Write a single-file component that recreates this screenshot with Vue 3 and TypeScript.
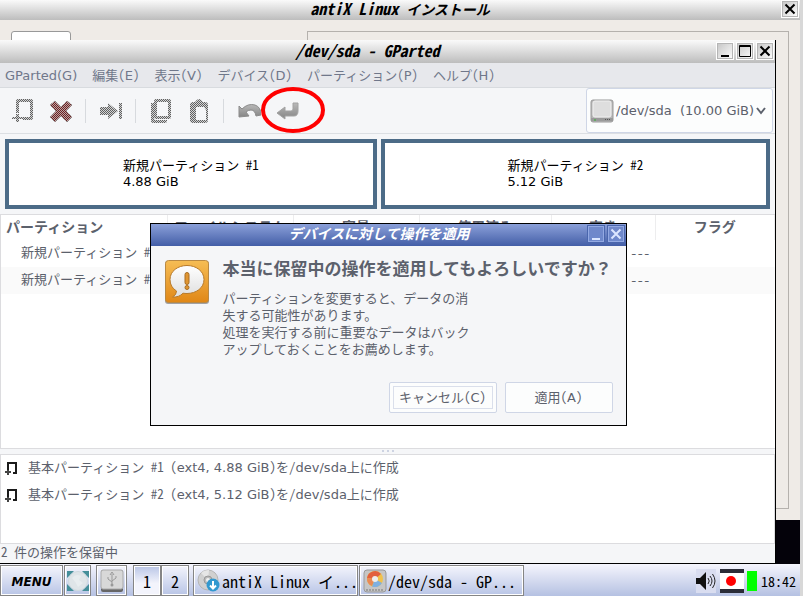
<script setup lang="ts">
import { ref } from 'vue'

interface Menu { label: string; key?: string }
interface Partition { name: string; number: number; size: string; share: number }

const menus: Menu[] = [
  { label: 'GParted(G)' },
  { label: '編集', key: 'E' },
  { label: '表示', key: 'V' },
  { label: 'デバイス', key: 'D' },
  { label: 'パーティション', key: 'P' },
  { label: 'ヘルプ', key: 'H' },
]
const partitions: Partition[] = [
  { name: '新規パーティション', number: 1, size: '4.88 GiB', share: 488 },
  { name: '新規パーティション', number: 2, size: '5.12 GiB', share: 512 },
]
const device = ref('sda')
const workspace = ref(1)
</script>

<template>
  <div class="desktop">
    <section class="installer">
      <header class="titlebar">
        <h1 class="title"><span class="half">antiX Linux </span>インストール</h1>
        <div class="controls">
          <button class="ctl" aria-label="閉じる"><svg viewBox="0 0 12 12"><path d="M1.5 1.5L10.5 10.5M10.5 1.5L1.5 10.5" /></svg></button>
        </div>
      </header>
      <div class="installer-body">
        <button class="tab" aria-label="メニュー"><i></i></button>
        <div class="group"></div>
      </div>
    </section>

    <section class="gparted">
      <header class="titlebar tall">
        <h2 class="title half">/dev/sda - GParted</h2>
        <div class="controls">
          <button class="ctl" aria-label="最小化"><svg viewBox="0 0 12 12"><path d="M2 11H10" /></svg></button>
          <button class="ctl" aria-label="最大化"><svg viewBox="0 0 12 12"><path class="thin" d="M.5 .5H11.5V11.5H.5ZM.5 1.5H11.5" /></svg></button>
          <button class="ctl" aria-label="閉じる"><svg viewBox="0 0 12 12"><path d="M1.5 1.5L10.5 10.5M10.5 1.5L1.5 10.5" /></svg></button>
        </div>
      </header>

      <nav class="menubar">
        <button v-for="m in menus" :key="m.label" class="menu">{{ m.label }}<template v-if="m.key"><span class="half">(</span>{{ m.key }}<span class="half">)</span></template></button>
      </nav>

      <div class="toolbar">
        <button class="tool" aria-label="新規">
          <svg viewBox="0 0 24 24">
            <defs>
              <pattern id="dither" width="2" height="2" patternUnits="userSpaceOnUse">
                <path d="M0 0h2v2H0z" fill="#d3d4d5" /><path d="M0 0h1v1H0zM1 1h1v1H1z" fill="#606060" shape-rendering="crispEdges" />
              </pattern>
              <pattern id="ditherRed" width="2" height="2" patternUnits="userSpaceOnUse">
                <path d="M0 0h2v2H0z" fill="#b9a4a4" /><path d="M0 0h1v1H0zM1 1h1v1H1z" fill="#6d2020" shape-rendering="crispEdges" />
              </pattern>
              <linearGradient id="steel" x1="0" y1="0" x2="0" y2="1">
                <stop offset="0" stop-color="#b9b9b9" /><stop offset="1" stop-color="#858585" />
              </linearGradient>
            </defs>
            <path fill="url(#dither)" fill-rule="evenodd" d="M7 0H20Q22 0 22 2V19Q22 21 20 21H12V18H19V3H8V14H5V2Q5 0 7 0ZM5 15H8V18H12V20H8V23H5V20H1V18H5Z" />
          </svg>
        </button>
        <button class="tool" aria-label="削除">
          <svg viewBox="0 0 24 24"><path fill="url(#ditherRed)" stroke="#777" stroke-width="1" stroke-dasharray="1 1" d="M6 2L12 8L18 2L23 6L17 12L23 18L18 23L12 17L6 23L1 18L7 12L1 6Z" /></svg>
        </button>
        <span class="sep"></span>
        <button class="tool" aria-label="リサイズ/移動">
          <svg viewBox="0 0 24 24"><path fill="url(#dither)" d="M1 8H9V4L19 12L9 20V16H1ZM20 4H23V20H20Z" /></svg>
        </button>
        <span class="sep"></span>
        <button class="tool" aria-label="コピー">
          <svg viewBox="0 0 24 24"><path fill="url(#dither)" fill-rule="evenodd" d="M7 0H20Q22 0 22 2V18Q22 20 20 20H7Q5 20 5 18V2Q5 0 7 0ZM8 3V17H19V3ZM2 4H5V20Q5 21 7 21H18V22Q18 24 16 24H4Q2 24 2 22Z" /></svg>
        </button>
        <button class="tool" aria-label="貼り付け">
          <svg viewBox="0 0 24 24"><path fill="url(#dither)" fill-rule="evenodd" d="M8 3Q10 0 12 0T16 3H18Q21 3 21 6V21Q21 24 18 24H6Q3 24 3 21V6Q3 3 6 3ZM9 8V21H19V11L17 8Z" /></svg>
        </button>
        <span class="sep"></span>
        <button class="tool" aria-label="元に戻す">
          <svg viewBox="0 0 24 24"><path fill="url(#steel)" stroke="#8b8b8b" d="M2 7L5 10Q11 4 18 6Q24 8 24 16L19 17Q18 11 14 11Q11 11 9 13L12 17L2 18Z" /></svg>
        </button>
        <button class="tool apply" aria-label="適用">
          <svg viewBox="0 0 24 24"><path fill="url(#steel)" stroke="#a2a2a2" d="M18 4H23V12Q23 17 19 17H10V20L2 14L10 8V12H16Q18 12 18 10Z" /></svg>
          <svg class="ring" viewBox="0 0 66 48"><ellipse cx="33" cy="24" rx="30" ry="21" /></svg>
        </button>
        <label class="device">
          <svg class="disk" viewBox="0 0 24 24">
            <rect x="1" y="1" width="22" height="22" rx="2" fill="#b9b9b9" stroke="#999" />
            <rect x="3" y="2" width="18" height="16" rx="2" fill="#dedede" stroke="#f0f0f0" />
            <path d="M1 19H23V22H1Z" fill="#9a9a9a" /><path d="M4 20H6V22H4Z" fill="#6a6" /><path d="M15 20.5H21" stroke="#555" stroke-dasharray="1 1" />
          </svg>
          <select v-model="device" aria-label="デバイス">
            <option value="sda">/dev/sda&nbsp; (10.00 GiB)</option>
          </select>
          <svg class="chev" viewBox="0 0 10 8"><path d="M1 1L5 6L9 1" /></svg>
        </label>
      </div>

      <div class="map">
        <div v-for="p in partitions" :key="p.number" class="part" :style="{ flexGrow: p.share }">
          <div>{{ p.name }}<span class="half"> #{{ p.number }}</span><br />{{ p.size }}</div>
        </div>
      </div>

      <div class="listing">
        <table>
          <colgroup>
            <col class="c-name" /><col class="c-fs" /><col class="c-fs" /><col class="c-used" /><col class="c-free" /><col />
          </colgroup>
          <thead>
            <tr><th class="first">パーティション</th><th>ファイルシステム</th><th>容量</th><th>使用済み</th><th>空き</th><th>フラグ</th></tr>
          </thead>
          <tbody>
            <tr v-for="p in partitions" :key="p.number">
              <td class="name">{{ p.name }}<span class="half"> #{{ p.number }}</span></td>
              <td></td><td></td><td></td><td class="num half">---</td><td></td>
            </tr>
          </tbody>
        </table>
      </div>

      <div class="grip"><i></i><i></i><i></i></div>

      <ul class="operations">
        <li v-for="p in partitions" :key="p.number">
          <svg viewBox="0 0 14 14"><path fill="none" stroke="#1b1b1b" stroke-width="2" d="M3 9V2H11V12H8" /><path stroke="#444" stroke-width="2" d="M0 11H6M3 9V14" /></svg>
          <span>基本パーティション<span class="half"> #{{ p.number }} (</span>ext4, {{ p.size }}<span class="half">)</span>を<span class="half">/</span>dev/sda上に作成</span>
        </li>
      </ul>

      <footer class="status"><span class="half">2 </span>件の操作を保留中</footer>

      <section class="dialog" role="alertdialog" aria-labelledby="ask">
        <header class="dialog-bar">
          <h2 class="title">デバイスに対して操作を適用</h2>
          <div class="controls">
            <button class="ctl blue" aria-label="最小化"><svg viewBox="0 0 12 12"><path d="M2 11H10" /></svg></button>
            <button class="ctl blue" aria-label="閉じる"><svg viewBox="0 0 12 12"><path d="M1.5 1.5L10.5 10.5M10.5 1.5L1.5 10.5" /></svg></button>
          </div>
        </header>
        <div class="dialog-body">
          <svg class="warn" viewBox="0 0 46 46">
            <defs>
              <linearGradient id="amber" x1="0" y1="0" x2="0" y2="1"><stop offset="0" stop-color="#f6bd55" /><stop offset="1" stop-color="#e08716" /></linearGradient>
              <linearGradient id="bubble" x1="0" y1="0" x2="0" y2="1"><stop offset="0" stop-color="#fff" /><stop offset="1" stop-color="#dedede" /></linearGradient>
            </defs>
            <rect x="1" y="2" width="44" height="43" rx="3" fill="#7d7d80" opacity=".7" />
            <rect x="1.500" y="1.500" width="43" height="42" rx="3" fill="url(#amber)" stroke="#b98944" />
            <path fill="url(#bubble)" stroke="#b87a2a" d="M23 6.500C32 6.500 40 12 40 20.500S32 34.500 23 34.500Q21 34.500 19 34.200Q15 38.500 8.500 38Q12.500 36 12.500 32Q6 28 6 20.500C6 12 14 6.500 23 6.500Z" />
            <rect x="21" y="13.500" width="4" height="12" rx="2" fill="#e09632" stroke="#a96d22" /><circle cx="23" cy="28.500" r="2" fill="#e09632" stroke="#a96d22" />
          </svg>
          <div class="message">
            <h3 id="ask">本当に保留中の操作を適用してもよろしいですか？</h3>
            <p>パーティションを変更すると、データの消<br />失する可能性があります。<br />処理を実行する前に重要なデータはバック<br />アップしておくことをお薦めします。</p>
          </div>
        </div>
        <div class="actions">
          <button class="btn focus"><span class="inner"><span>キャンセル<span class="half">(</span>C<span class="half">)</span></span></span></button>
          <button class="btn">適用<span class="half">(</span>A<span class="half">)</span></button>
        </div>
      </section>
    </section>

    <footer class="taskbar">
      <button class="task start">MENU</button>
      <button class="task show" aria-label="デスクトップを表示">
        <svg viewBox="0 0 22 22"><path fill="#458f99" d="M0 1H7L0 8ZM15 1H22V8ZM0 14L7 21H0ZM22 14V21H15Z" /><circle cx="11" cy="11" r="9.500" fill="#dfe5e8" stroke="#cfdade" /><path d="M5 8Q9 3 14 6L12 10L16 13L11 17Q9 12 5 8Z" fill="#e8edef" /></svg>
      </button>
      <button class="task usb" aria-label="USB">
        <svg viewBox="0 0 24 24"><rect x="1" y="1" width="22" height="22" rx="2" fill="#666" /><rect x="1" y="1" width="22" height="19" rx="2" fill="#d8d8d8" stroke="#aaa" /><path d="M12 16V5M12 13L8 10V8M12 12L16 9V7M10 6L12 3L14 6" fill="none" stroke="#999" /><circle cx="12" cy="16" r="1.500" fill="#999" /></svg>
      </button>
      <div class="pager">
        <button v-for="n in 2" :key="n" class="task space" :class="{ on: workspace === n }" @click="workspace = n">{{ n }}</button>
      </div>
      <button class="task app">
        <svg viewBox="0 0 24 24"><circle cx="11" cy="11" r="10" fill="#d0d0d0" stroke="#b5b5b5" /><path d="M11 11L4 4A10 10 0 0 1 12 1Z" fill="#e6e6e6" /><circle cx="11" cy="11" r="4" fill="#bbb" stroke="#999" /><circle cx="11" cy="11" r="2" fill="#f1f1f1" /><circle cx="16" cy="16" r="6.500" fill="#3298cf" /><path d="M16 12V19M13 16.500L16 19.500L19 16.500" fill="none" stroke="#fff" stroke-width="2" /></svg>
        <span>antiX Linux イ...</span>
      </button>
      <button class="task app">
        <svg viewBox="0 0 24 24"><rect x="1" y="1" width="22" height="22" rx="3" fill="#c6c6c6" stroke="#999" /><path d="M3 21H21" stroke="#777" stroke-dasharray="2 1" /><circle cx="12" cy="10" r="8" fill="#f0c24c" /><path d="M12 10L4 9A8 8 0 0 1 18 5Z" fill="#e2603e" /><path d="M12 10L4 9A8 8 0 0 0 9 17Z" fill="#e98a55" /><path d="M12 10L9 17.500A8 8 0 0 0 19 14Z" fill="#7fb0e0" /><circle cx="12" cy="10" r="3" fill="#eee" /></svg>
        <span>/dev/sda - GP...</span>
      </button>
      <div class="tray">
        <svg class="speaker" viewBox="0 0 20 24"><path fill="#111" d="M0 9H4L10 3V21L4 15H0Z" /><path fill="none" stroke="#222" d="M12 9Q14.500 12 12 15M14 7Q18 12 14 17M16.500 5Q21.500 12 16.500 19" /></svg>
        <svg class="flag" viewBox="0 0 24 24"><path fill="#2b2d38" d="M0 0H24V24H0Z" /><path fill="#fff" d="M0 4H24V20H0Z" /><circle cx="11" cy="12" r="5" fill="#f00" /></svg>
        <span class="meter"></span>
        <time>18:42</time>
      </div>
    </footer>
  </div>
</template>

<style>
body { margin: 0; overflow: hidden; }
</style>

<style scoped>
.desktop {
  position: relative;
  height: 100vh;
  border-right: 3px solid #d8d8d8;
  box-sizing: border-box;
  background: #04020a;
  overflow: hidden;
  font: 13px/17px "DejaVu Sans", "Noto Sans CJK JP", sans-serif;
  color: #5c616c;
}
.desktop * { box-sizing: border-box; }
button, select { font: inherit; color: inherit; margin: 0; padding: 0; border: 0; background: none; }
h1, h2, h3, p, ul { margin: 0; padding: 0; }
svg { display: block; flex: none; }
.half { font-family: "Noto Sans Mono CJK JP", "Liberation Mono", monospace; line-height: 1; white-space: pre; }

.titlebar, .dialog-bar {
  display: grid;
  align-items: center;
  flex: none;
}
.titlebar { height: 20px; background: linear-gradient(#fafafa, #bdbdbd); color: #000; }
.titlebar.tall { height: 23px; }
.title {
  grid-area: 1 / 1;
  padding-bottom: 4px;
  text-align: center;
  font: italic bold 14px/16px "Noto Sans CJK JP", sans-serif;
  white-space: pre;
}
.title .half, .title.half { font-family: "Noto Sans Mono CJK JP", "Liberation Mono", monospace; font-size: 16px; }
.tall .title { padding-right: 40px; }
.dialog-bar .title { padding-right: 18px; }
.controls { grid-area: 1 / 1; place-self: start end; display: flex; gap: 2px; padding-right: 1px; }
.tall .controls { padding-top: 2px; }
.ctl {
  width: 18px; height: 18px; padding: 2px;
  border: 1px solid #fff; outline: 1px solid #b5b5b5; outline-offset: -2px;
  background: linear-gradient(135deg, #c4c4c4, #fff);
}
.ctl svg { width: 12px; height: 12px; }
.ctl path { fill: none; stroke: #000; stroke-width: 2; }
.ctl path.thin { stroke-width: 1; }
.ctl.blue { border-color: #4a66ad; outline-color: #93a9e2; background: linear-gradient(#7088ca, #6d88cc); }
.ctl.blue path { stroke: #dbe6ff; }

.installer { position: absolute; inset: 0 0 76px 0; display: flex; flex-direction: column; background: #efebe7; }
.installer-body { flex: 1; display: flex; align-items: flex-start; justify-content: space-between; padding: 11px; }
.tab { width: 60px; height: 30px; padding: 8px 13px; border: 1px solid #999; border-radius: 3px; background: #fff; display: flex; justify-content: flex-end; }
.tab i { width: 4px; height: 2px; background: #444; }
.group { align-self: stretch; width: 62%; border: 1px solid #b5b1ad; }

.gparted {
  position: absolute; inset: 40px 24px 32px 0;
  display: flex; flex-direction: column;
  border: solid #000; border-width: 0 1px 1px 0;
  background: #f5f6f8;
}
.menubar { display: flex; flex: none; height: 25px; padding-left: 5px; gap: 15px; background: #e7e8ec; border-bottom: 1px solid #d8dbdf; color: #70778a; }
.menu { white-space: nowrap; }

.toolbar { display: flex; align-items: center; flex: none; height: 46px; padding: 0 2px 0 4px; border-bottom: 1px solid #dcdfe3; }
.tool { position: relative; align-self: stretch; width: 38px; display: grid; place-items: start center; padding-top: 11px; }
.tool svg { width: 24px; height: 24px; }
.tool .ring { position: absolute; left: -8px; top: -2px; width: 66px; height: 48px; z-index: 2; }
.ring ellipse { fill: none; stroke: #f00; stroke-width: 4; }
.sep { width: 1px; height: 24px; margin: 0 6px 0 5px; background: #d7dade; }
.device {
  display: flex; align-items: center; align-self: stretch; width: 187px; margin-left: auto; padding: 0 6px 0 3px;
  border: 1px solid #cfd6e6; border-radius: 3px; background: #fcfdfd;
}
.disk { width: 24px; height: 24px; }
.device select { flex: 1; min-width: 0; appearance: none; padding-left: 2px; outline: 0; white-space: nowrap; }
.chev { width: 10px; height: 8px; }
.chev path { fill: none; stroke: #5c616c; stroke-width: 2; }

.map { display: flex; flex: none; gap: 4px; padding: 5px; }
.part { flex: 1 1 0; height: 70px; display: grid; place-items: center; border: 4px solid #4c6b87; background: #fff; color: #000; line-height: 16px; }

.listing { flex: 1; border: 1px solid #dcdcdf; border-right: 0; background: #fff; overflow: hidden; }
table { width: 100%; table-layout: fixed; border-collapse: collapse; }
.c-name { width: 166px; }
.c-fs { width: 126px; }
.c-used { width: 132px; }
.c-free { width: 104px; }
th { height: 25px; padding: 0; border-right: 1px solid #ededee; font-size: 14px; font-weight: bold; white-space: nowrap; color: #5c616c; }
th.first { text-align: left; padding-left: 5px; }
td { height: 27px; padding: 0 5px 2px; white-space: nowrap; }
td.name { padding-left: 20px; overflow: hidden; }
.num { text-align: right; }
tbody tr:nth-child(even) { background: #fafafa; }

.grip { display: flex; flex: none; justify-content: center; gap: 3px; height: 5px; padding-top: 1px; }
.grip i { width: 2px; height: 2px; background: #cdd3e2; }

.operations { flex: none; height: 90px; border: 1px solid #dcdcdf; background: #fff; list-style: none; }
.operations li { display: flex; align-items: center; height: 27px; padding: 0 0 2px 4px; gap: 9px; white-space: nowrap; }
.operations svg { width: 14px; height: 14px; }
.status { flex: none; height: 19px; padding-left: 1px; line-height: 18px; }

.dialog {
  position: absolute; top: 183px; left: 50%; width: 477px; margin-left: -238px;
  border: 1px solid #000; background: #f5f6f8;
}
.dialog-bar { height: 22px; background: linear-gradient(#8ba0d9, #435ea7); color: #fff; }
.dialog-bar .controls { padding-top: 1px; }
.dialog-body { display: flex; gap: 13px; padding: 13px 13px 0; }
.warn { width: 46px; height: 46px; }
.message h3 { font: bold 17px/18px "Noto Sans CJK JP", sans-serif; white-space: nowrap; }
.message p { margin-top: 13px; white-space: nowrap; }
.actions { display: flex; justify-content: flex-end; gap: 8px; padding: 24px 13px 12px; }
.btn { width: 108px; height: 31px; border: 1px solid #cfd6e6; border-radius: 2px; background: #fcfdfd; }
.btn.focus { padding: 3px; }
.inner { display: grid; place-items: center; height: 100%; border: 1px solid #dadfeb; }

.taskbar {
  position: absolute; inset: auto 0 0 0; height: 32px;
  display: flex; align-items: stretch; padding-top: 1px;
  background: linear-gradient(#f5f5fd, #b5c1e2);
  color: #000;
  font: 16px/20px "Noto Sans Mono CJK JP", "Liberation Mono", monospace;
}
.task { border: 1px solid #858585; outline: 1px solid #fff; outline-offset: -2px; background: linear-gradient(#f3f4fc, #b9c5e6); display: flex; align-items: center; justify-content: center; white-space: nowrap; }
.start { width: 63px; padding-top: 2px; font: italic bold 12px/16px "DejaVu Sans", sans-serif; }
.show { width: 27px; margin-left: 1px; }
.show svg { width: 22px; height: 22px; }
.usb { width: 31px; margin-left: 5px; }
.usb svg { width: 24px; height: 24px; }
.pager { display: flex; margin-left: 6px; }
.space { width: 28px; }
.space.on { background: linear-gradient(#b9c5e6, #f3f4fc 60%); }
.app { width: 165px; margin-left: 1px; padding-left: 3px; gap: 1px; justify-content: flex-start; overflow: hidden; }
.pager + .app { margin-left: 4px; }
.app svg { width: 24px; height: 24px; }
.tray { display: flex; align-items: center; margin-left: auto; padding-right: 4px; }
.speaker { width: 20px; height: 24px; margin-right: 4px; background: #d9ddf0; }
.flag { width: 24px; height: 24px; }
.meter { width: 10px; height: 20px; margin: 0 4px 0 3px; background: #0f0; }
time { font-size: 14px; }
</style>
